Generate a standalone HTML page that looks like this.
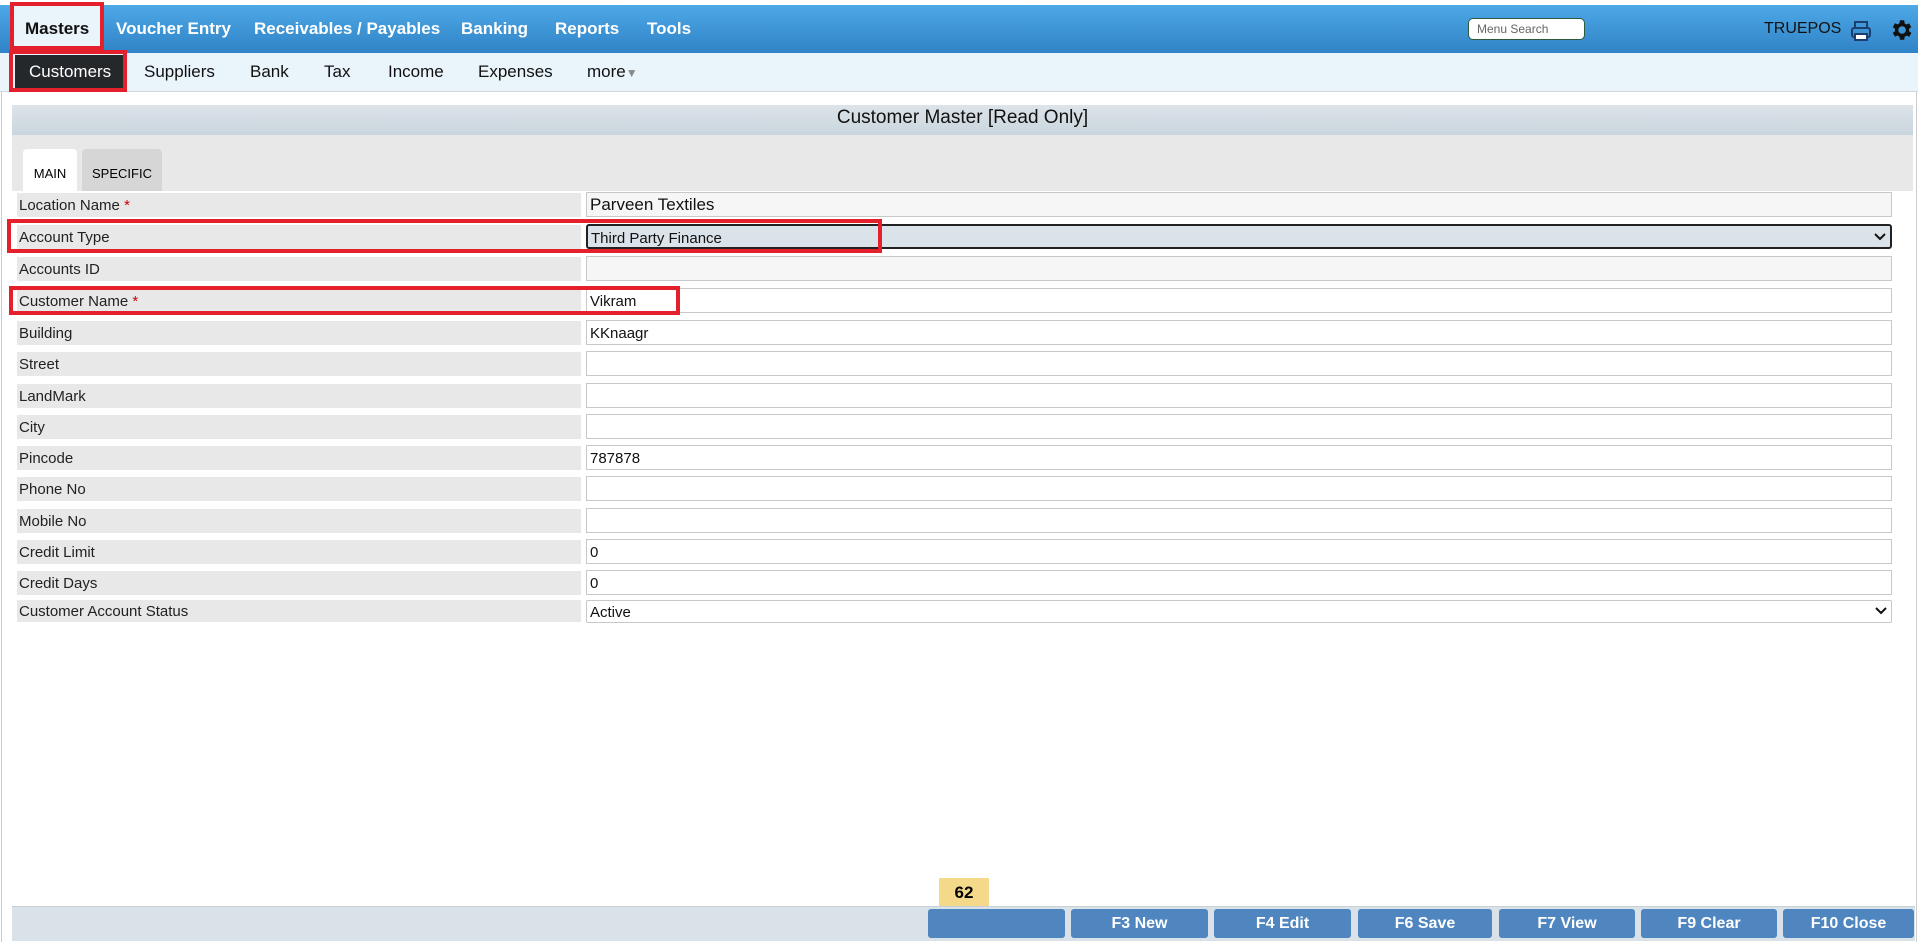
<!DOCTYPE html>
<html><head><meta charset="utf-8"><style>
*{box-sizing:border-box;margin:0;padding:0}
body{width:1918px;height:942px;overflow:hidden;background:#fff;font-family:"Liberation Sans",Arial,sans-serif;position:relative}
.a{position:absolute}
.top{left:0;top:5px;width:1918px;height:48px;background:linear-gradient(#4ea8e6,#2f83c6)}
.mi{position:absolute;top:19px;font-size:17px;font-weight:bold;color:#fff}
.sub{left:0;top:53px;width:1918px;height:39px;background:#e9f4fb;border-bottom:1px solid #d0d8de}
.si{position:absolute;top:62px;font-size:17px;color:#111}
.red{position:absolute;border:4px solid #e3202b}
.lbl{position:absolute;left:17px;width:564px;height:24px;background:#e8e8e8;font-size:15px;color:#222;padding:4px 2px}
.inp{position:absolute;left:586px;width:1306px;height:25px;border:1px solid #c8c8c8;background:#fff;font-size:15px;color:#111;padding:4px 3px}
.chev{position:absolute;right:4px;top:6px}
.btn{position:absolute;top:909px;height:29px;background:#4f86bf;border-radius:3px;color:#fff;font-weight:bold;font-size:16px;text-align:center;line-height:29px}
</style></head><body>
<div class="a" style="left:1px;top:92px;width:1916px;height:850px;border-left:1px solid #ccc;border-right:1px solid #ccc"></div>
<div class="a top"></div>
<div class="a" style="left:12px;top:5px;width:90px;height:48px;background:#e9f4fb"></div>
<div class="mi" style="left:25px;color:#111">Masters</div>
<div class="mi" style="left:116px">Voucher Entry</div>
<div class="mi" style="left:254px">Receivables / Payables</div>
<div class="mi" style="left:461px">Banking</div>
<div class="mi" style="left:555px">Reports</div>
<div class="mi" style="left:647px">Tools</div>
<div class="a" style="left:1468px;top:18px;width:117px;height:22px;background:#fff;border:1px solid #2c5a3a;border-radius:5px;font-size:12px;color:#666;padding:3px 8px">Menu Search</div>
<div class="a" style="left:1764px;top:20px;font-size:16px;color:#111">TRUEPOS</div>
<svg class="a" style="left:1850px;top:20px" width="22" height="22" viewBox="0 0 22 22" fill="none" stroke="#1d3f6e" stroke-width="2"><rect x="5" y="2" width="12" height="6"/><rect x="2" y="8" width="18" height="9" rx="2"/><rect x="5" y="14" width="12" height="6" fill="#fff"/></svg>
<svg class="a" style="left:1888px;top:17px" width="26" height="26" viewBox="0 0 24 24"><path fill="#111" d="M19.4 13a7.5 7.5 0 0 0 0-2l2.1-1.6-2-3.5-2.5 1a7 7 0 0 0-1.7-1L15 3h-4l-.4 2.8a7 7 0 0 0-1.7 1l-2.5-1-2 3.5L6.5 11a7.5 7.5 0 0 0 0 2l-2.1 1.6 2 3.5 2.5-1a7 7 0 0 0 1.7 1L11 21h4l.4-2.8a7 7 0 0 0 1.7-1l2.5 1 2-3.5zM13 15.5a3.5 3.5 0 1 1 0-7 3.5 3.5 0 0 1 0 7z"/></svg>
<div class="a sub"></div>
<div class="a" style="left:15px;top:55px;width:109px;height:33px;background:#25282b"></div>
<div class="si" style="left:29px;color:#fff">Customers</div>
<div class="si" style="left:144px">Suppliers</div>
<div class="si" style="left:250px">Bank</div>
<div class="si" style="left:324px">Tax</div>
<div class="si" style="left:388px">Income</div>
<div class="si" style="left:478px">Expenses</div>
<div class="si" style="left:587px">more<span style="color:#888;font-size:12px">▼</span></div>
<div class="red" style="left:10px;top:2px;width:94px;height:48px"></div>
<div class="red" style="left:9px;top:50px;width:118px;height:42px"></div>
<div class="a" style="left:12px;top:105px;width:1901px;height:30px;background:linear-gradient(#dde4ea,#c9d5dd);text-align:center;font-size:19px;color:#111;line-height:26px">Customer Master [Read Only]</div>
<div class="a" style="left:12px;top:135px;width:1901px;height:56px;background:#e8e8e8"></div>
<div class="a" style="left:23px;top:149px;width:54px;height:42px;background:#fff;border-radius:4px 4px 0 0;font-size:13px;padding-top:17px;text-align:center">MAIN</div>
<div class="a" style="left:82px;top:149px;width:80px;height:42px;background:#d6d6d6;border-radius:4px 4px 0 0;font-size:13px;padding-top:17px;text-align:center">SPECIFIC</div>

<div class="lbl" style="top:193px">Location Name <span style="color:#c00">*</span></div><div class="inp" style="top:192px;background:#f6f6f6;font-size:17px;padding-top:2px">Parveen Textiles</div>
<div class="lbl" style="top:225px">Account Type</div><div class="inp" style="top:224px;background:#dbe3ea;border:2px solid #222;border-radius:3px">Third Party Finance<svg class="chev" width="12" height="10" viewBox="0 0 12 10"><path d="M1 2l5 5 5-5" stroke="#111" stroke-width="2" fill="none"/></svg></div>
<div class="lbl" style="top:257px">Accounts ID</div><div class="inp" style="top:256px;background:#f6f6f6"></div>
<div class="lbl" style="top:289px">Customer Name <span style="color:#c00">*</span></div><div class="inp" style="top:288px">Vikram</div>
<div class="lbl" style="top:321px">Building</div><div class="inp" style="top:320px">KKnaagr</div>
<div class="lbl" style="top:352px">Street</div><div class="inp" style="top:351px"></div>
<div class="lbl" style="top:384px">LandMark</div><div class="inp" style="top:383px"></div>
<div class="lbl" style="top:415px">City</div><div class="inp" style="top:414px"></div>
<div class="lbl" style="top:446px">Pincode</div><div class="inp" style="top:445px">787878</div>
<div class="lbl" style="top:477px">Phone No</div><div class="inp" style="top:476px"></div>
<div class="lbl" style="top:509px">Mobile No</div><div class="inp" style="top:508px"></div>
<div class="lbl" style="top:540px">Credit Limit</div><div class="inp" style="top:539px">0</div>
<div class="lbl" style="top:571px">Credit Days</div><div class="inp" style="top:570px">0</div>
<div class="lbl" style="top:600px;height:22px;padding-top:3px">Customer Account Status</div><div class="inp" style="top:600px;height:23px;padding-top:3px;border-radius:2px">Active<svg class="chev" style="top:5px" width="12" height="10" viewBox="0 0 12 10"><path d="M1 2l5 5 5-5" stroke="#111" stroke-width="2" fill="none"/></svg></div>

<div class="red" style="left:7px;top:219px;width:875px;height:34px"></div>
<div class="red" style="left:9px;top:286px;width:671px;height:29px"></div>

<div class="a" style="left:939px;top:878px;width:50px;height:29px;background:#f5d98a;font-weight:bold;font-size:17px;text-align:center;line-height:29px">62</div>
<div class="a" style="left:12px;top:906px;width:1903px;height:35px;background:#d8e2e8;border-top:1px solid #c8d0d6"></div>
<div class="btn" style="left:928px;width:137px"></div>
<div class="btn" style="left:1071px;width:137px">F3 New</div>
<div class="btn" style="left:1214px;width:137px">F4 Edit</div>
<div class="btn" style="left:1358px;width:134px">F6 Save</div>
<div class="btn" style="left:1499px;width:136px">F7 View</div>
<div class="btn" style="left:1641px;width:136px">F9 Clear</div>
<div class="btn" style="left:1783px;width:131px">F10 Close</div>
</body></html>
